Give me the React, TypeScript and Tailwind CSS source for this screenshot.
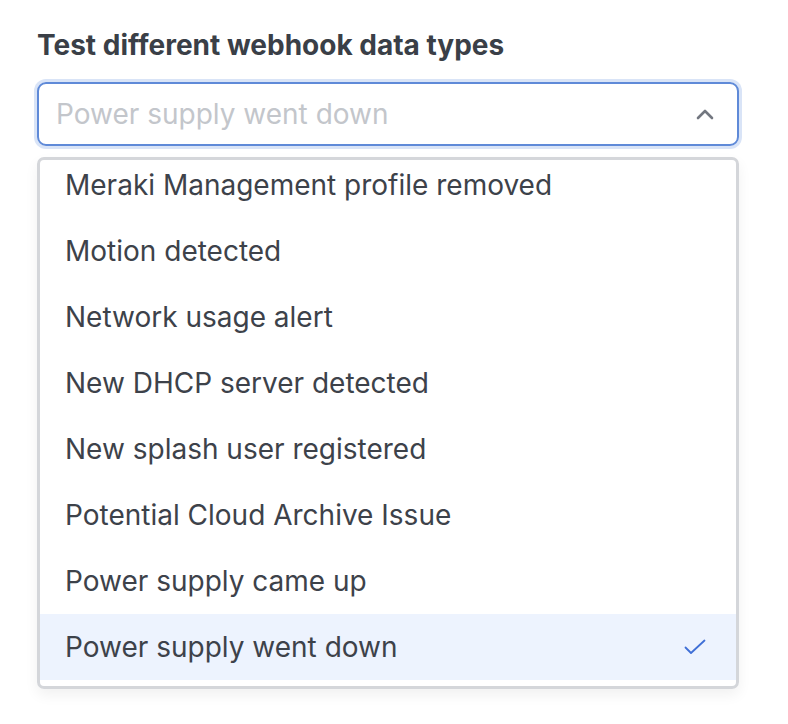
import React from "react";

const items = [
  "Meraki Management profile removed",
  "Motion detected",
  "Network usage alert",
  "New DHCP server detected",
  "New splash user registered",
  "Potential Cloud Archive Issue",
  "Power supply came up",
  "Power supply went down",
];

export default function App() {
  return (
    <div
      className="w-[788px] h-[724px] bg-white"
      style={{ fontFamily: "Inter, 'Noto Sans', sans-serif" }}
    >
      <div className="pl-[37px] pt-[28px] w-[739px]">
        <div className="text-[28px] leading-[34px] font-bold text-[#3a3f47]">
          Test different webhook data types
        </div>
        <div className="mt-[20px] h-[64px] rounded-[9px] border-[2.5px] border-[#5f8ad8] ring-[3px] ring-[#d9e4f7] flex items-center pl-[17px] pr-[22px]">
          <span className="flex-1 text-[28px] text-[#c3c6cb]">Power supply went down</span>
          <svg width="20" height="12" viewBox="0 0 20 12" fill="none">
            <path d="M3 10 L10 3 L17 10" stroke="#737780" strokeWidth="2.6" strokeLinecap="round" strokeLinejoin="round" />
          </svg>
        </div>
        <div className="mt-[11px] h-[532px] rounded-[7px] border-[3px] border-[#d4d6da] shadow-[0_6px_14px_rgba(0,0,0,0.06)] overflow-hidden pb-[6px]">
          <div className="h-full overflow-hidden">
            <div className="-mt-[8px]">
              {items.map((it, i) => {
                const sel = i === items.length - 1;
                return (
                  <div
                    key={it}
                    className={`h-[66px] flex items-center pl-[25px] pr-[30px] text-[28px] text-[#3d424a] ${sel ? "bg-[#edf3fe]" : ""}`}
                  >
                    <span className="flex-1">{it}</span>
                    {sel && (
                      <svg width="22" height="16" viewBox="0 0 22 16" fill="none">
                        <path d="M1.5 8.5 L7 14 L20.5 1.5" stroke="#3f6fd6" strokeWidth="1.8" strokeLinecap="round" strokeLinejoin="round" />
                      </svg>
                    )}
                  </div>
                );
              })}
            </div>
          </div>
        </div>
      </div>
    </div>
  );
}
